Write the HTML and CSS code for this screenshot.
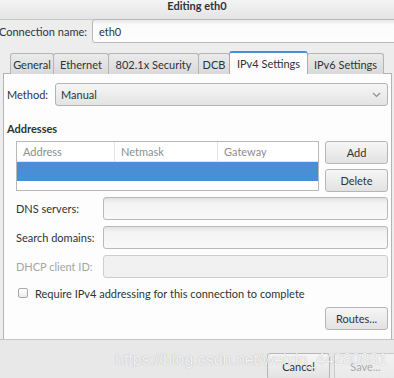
FILE: index.html
```html
<!DOCTYPE html>
<html lang="en">
  <head>
    <meta charset="UTF-8" />
    <title>Editing eth0</title>
    <link rel="stylesheet" href="styles.css">
  </head>
  <body>
    <div class="dialog">
      <div class="titlebar">Editing eth0</div>

      <div class="conn-row">
        <label class="conn-label">Connection name:</label>
        <div class="entry conn-entry">eth0</div>
      </div>

      <div class="tabs">
        <div class="tab tab-general">General</div>
        <div class="tab tab-ethernet">Ethernet</div>
        <div class="tab tab-security">802.1x Security</div>
        <div class="tab tab-dcb">DCB</div>
        <div class="tab tab-ipv4 active">IPv4 Settings</div>
        <div class="tab tab-ipv6">IPv6 Settings</div>
      </div>

      <div class="page">
        <div class="method-row">
          <label class="method-label">Method:</label>
          <div class="combo">
            <span>Manual</span>
            <svg class="chevron" width="9" height="6" viewBox="0 0 9 6">
              <path d="M1 1 L4.5 4.5 L8 1" fill="none" stroke="#8a8e8f" stroke-width="1.1" />
            </svg>
          </div>
        </div>

        <h3 class="section-title">Addresses</h3>

        <div class="addresses">
          <div class="table">
            <div class="table-head">
              <div class="col col-address">Address</div>
              <div class="col col-netmask">Netmask</div>
              <div class="col col-gateway">Gateway</div>
            </div>
            <div class="row-selected"></div>
          </div>
          <div class="side-buttons">
            <button class="btn">Add</button>
            <button class="btn">Delete</button>
          </div>
        </div>

        <div class="form">
          <div class="form-row">
            <label>DNS servers:</label>
            <div class="entry"></div>
          </div>
          <div class="form-row">
            <label>Search domains:</label>
            <div class="entry"></div>
          </div>
          <div class="form-row disabled">
            <label>DHCP client ID:</label>
            <div class="entry"></div>
          </div>
        </div>

        <div class="check-row">
          <span class="checkbox"></span>
          <label>Require IPv4 addressing for this connection to complete</label>
        </div>

        <div class="routes-row">
          <button class="btn">Routes...</button>
        </div>
      </div>

      <div class="footer">
        <button class="btn btn-footer">Cancel</button>
        <button class="btn btn-footer btn-disabled">Save...</button>
        <span class="watermark">https://blog.csdn.net/weixin_44280881</span>
      </div>
    </div>
  </body>
</html>
```

FILE: styles.css
```css
/* Reset and basic styles */
* {
  margin: 0;
  padding: 0;
  box-sizing: border-box;
}
body {
  width: 394px;
  height: 378px;
  overflow: hidden;
  font-family: Lato, "Liberation Sans", sans-serif;
  font-size: 11px;
  color: #2e3436;
  background: #ededed;
}
.dialog {
  display: flex;
  flex-direction: column;
  width: 394px;
  height: 378px;
  overflow: hidden;
}

/* Title bar */
.titlebar {
  height: 20px;
  flex: none;
  text-align: center;
  line-height: 12px;
  font-weight: bold;
  font-size: 11px;
  background: linear-gradient(#f4f4f4, #e4e4e4);
  border-bottom: 1px solid #c6c6c6;
}

/* Connection name */
.conn-row {
  display: flex;
  align-items: center;
  height: 23px;
  flex: none;
}
.conn-label {
  width: 93px;
  margin-left: -1px;
  flex: none;
}
.entry {
  height: 23px;
  border: 1px solid #b9b9b9;
  border-radius: 3px;
  background: linear-gradient(#e2e2e2, #f3f3f3 5px, #f8f8f8);
  display: flex;
  align-items: center;
  padding-left: 6px;
}
.conn-entry {
  width: 320px;
  flex: none;
  margin-top: -1px;
  height: 24px;
  background: linear-gradient(#e8e8e8, #fbfbfb 5px, #fdfdfd);
}

/* Tabs */
.tabs {
  display: flex;
  align-items: flex-end;
  height: 31px;
  flex: none;
  padding-left: 10px;
  margin-bottom: -1px;
  position: relative;
  z-index: 1;
}
.tab {
  height: 21px;
  margin-right: -1px;
  border: 1px solid #b4b4b4;
  border-bottom: none;
  border-radius: 3px 3px 0 0;
  background: linear-gradient(#ebebeb, #d9d9d9);
  display: flex;
  align-items: center;
  justify-content: center;
}
.tab-general { width: 44px; }
.tab-ethernet { width: 56px; }
.tab-security { width: 91px; }
.tab-dcb { width: 32px; }
.tab-ipv4 { width: 79px; }
.tab-ipv6 { width: 77px; }
.tab.active {
  height: 23px;
  background: #fdfdfd;
  border-color: #8fb3dc;
  border-top: 2px solid #4a90d9;
  position: relative;
  z-index: 2;
  padding-bottom: 1px;
}

/* Page */
.page {
  margin-left: 3px;
  width: 389px;
  height: 266px;
  flex: none;
  border: 1px solid #b4b4b4;
  border-bottom: none;
  background: #fdfdfd;
  padding: 9px 3px 0 3px;
}
.method-row {
  display: flex;
  align-items: center;
  height: 23px;
}
.method-label {
  width: 48px;
  flex: none;
}
.combo {
  flex: 1;
  height: 23px;
  border: 1px solid #b4b4b4;
  border-radius: 3px;
  background: linear-gradient(#f6f6f6, #e3e3e3);
  display: flex;
  align-items: center;
  justify-content: space-between;
  padding: 0 6px 0 5px;
}
.section-title {
  margin-top: 16px;
  height: 14px;
  line-height: 14px;
  font-size: 11px;
  font-weight: bold;
}

/* Addresses */
.addresses {
  display: flex;
  gap: 6px;
  margin-top: 5px;
  padding-left: 9px;
}
.table {
  width: 303px;
  height: 50px;
  border: 1px solid #b8b8b8;
  background: #fff;
}
.table-head {
  display: flex;
  height: 20px;
  color: #8b8e8f;
  border-bottom: 1px solid #e4e4e4;
}
.col {
  display: flex;
  align-items: center;
  padding-left: 6px;
  border-right: 1px solid #e4e4e4;
}
.col-address { width: 98px; }
.col-netmask { width: 103px; }
.col-gateway { flex: 1; border-right: none; }
.row-selected {
  height: 19px;
  background: #4a8fd6;
}
.side-buttons {
  display: flex;
  flex-direction: column;
  gap: 5px;
}
.btn {
  width: 63px;
  height: 23px;
  border: 1px solid #b6b6b6;
  border-radius: 3px;
  background: linear-gradient(#f6f6f6, #e2e2e2);
  font-family: inherit;
  font-size: 11px;
  color: #2e3436;
}

/* Form rows */
.form {
  display: flex;
  flex-direction: column;
  gap: 6px;
  margin-top: 5px;
  padding-left: 9px;
}
.form-row {
  display: flex;
  align-items: center;
}
.form-row label {
  width: 87px;
  flex: none;
}
.form-row .entry {
  flex: 1;
}
.form-row.disabled label {
  color: #a3a6a7;
}
.form-row.disabled .entry {
  background: #f1f1f1;
  border-color: #cdcdcd;
}

/* Checkbox */
.check-row {
  display: flex;
  align-items: center;
  height: 14px;
  margin-top: 8px;
  padding-left: 11px;
}
.checkbox {
  width: 10px;
  height: 10px;
  border: 1px solid #a9a9a9;
  border-radius: 2px;
  background: linear-gradient(#fff, #ececec);
  margin-right: 7px;
}
.routes-row {
  display: flex;
  justify-content: flex-end;
  margin-top: 7px;
}

/* Footer */
.footer {
  flex: 1;
  display: flex;
  gap: 4px;
  padding: 13px 0 0 267px;
  border-top: 1px solid #c4c4c4;
  background: #e8e8e8;
  position: relative;
}
.btn-footer {
  height: 27px;
  flex: none;
}
.btn-disabled {
  color: #a8abac;
  border-color: #cbcbcb;
  background: linear-gradient(#f2f2f2, #e9e9e9);
}
.watermark {
  position: absolute;
  left: 115px;
  top: 11px;
  font-family: "Liberation Sans", sans-serif;
  font-size: 16px;
  color: rgba(255, 255, 255, 0.85);
  text-shadow: 0 0 1px rgba(120, 120, 120, 0.6);
  white-space: nowrap;
}
```
